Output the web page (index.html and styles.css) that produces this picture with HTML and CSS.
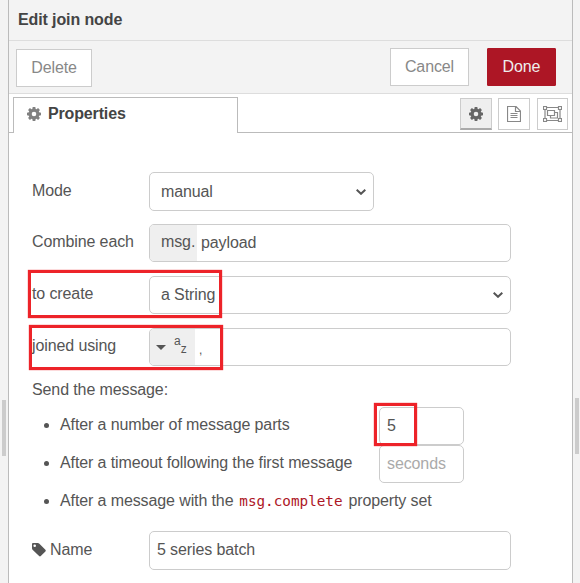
FILE: index.html
```html
<!DOCTYPE html>
<html lang="en">
<head>
<meta charset="utf-8">
<title>Edit join node</title>
<link rel="stylesheet" href="styles.css">
</head>
<body>
<svg class="defs" width="0" height="0">
  <symbol id="gear" viewBox="0 0 14 14">
    <path fill-rule="evenodd" d="M5.700 0h2.600l.4 1.900.8.300 1.600-1.100 1.800 1.800-1.100 1.600.3.800 1.900.4v2.600l-1.900.4-.3.800 1.100 1.600-1.800 1.800-1.600-1.100-.8.300-.4 1.900H5.700l-.4-1.900-.8-.3-1.600 1.100-1.800-1.800 1.100-1.600-.3-.8L0 8.300V5.700l1.900-.4.300-.8-1.100-1.600 1.800-1.800 1.600 1.100.8-.3zM7 4.700a2.300 2.300 0 1 0 0 4.600 2.300 2.300 0 0 0 0-4.600z"/>
  </symbol>
</svg>
<div class="app">
  <div class="gutter left"><span class="handle"></span></div>
  <main class="panel">
    <header class="title">Edit join node</header>
    <div class="toolbar">
      <button class="btn delete">Delete</button>
      <button class="btn cancel">Cancel</button>
      <button class="btn done">Done</button>
    </div>
    <nav class="tabs">
      <div class="tab"><svg class="gear" width="14" height="14"><use href="#gear"/></svg>Properties</div>
      <div class="icons">
        <span class="icon active"><svg width="14" height="14"><use href="#gear"/></svg></span>
        <span class="icon"><svg width="14" height="16" viewBox="0 0 14 16"><path d="M.5.5h8.500l4.500 4.500v10.500H.5zM8.500.5v5h5M3.500 7.500h7M3.500 9.500h7M3.500 11.500h7"/></svg></span>
        <span class="icon group"><svg width="19" height="16" viewBox="0 0 19 16"><path d="M3.500 1.500h12M3.500 14.500h12M2 3v10M17 3v10M.5.5h3v3h-3zM15.500.5h3v3h-3zM.5 12.500h3v3h-3zM15.500 12.500h3v3h-3zM4.500 4.500h7v5h-7zM11.500 6.500h3v5.500h-7V9.500"/></svg></span>
      </div>
    </nav>
    <form class="form">
      <div class="row mode"><label>Mode</label><div class="field select">manual<svg class="chev" width="10" height="6" viewBox="0 0 10 6"><path d="M.7.8 5 4.800 9.300.8"/></svg></div></div>
      <div class="row"><label>Combine each</label><div class="field typed"><span class="prefix msg">msg.</span><span class="value">payload</span></div></div>
      <div class="row"><label>to create</label><div class="field select">a String<svg class="chev" width="10" height="6" viewBox="0 0 10 6"><path d="M.7.8 5 4.800 9.300.8"/></svg></div><i class="mark mark-create"></i></div>
      <div class="row"><label>joined using</label><div class="field typed"><span class="prefix str"><b class="caret"></b><span class="az"><span>a</span><span>z</span></span></span><span class="value comma">,</span></div><i class="mark mark-joined"></i></div>
      <p class="send">Send the message:</p>
      <ul class="rules">
        <li><span class="desc">After a number of message parts</span><div class="field small">5<i class="mark mark-count"></i></div></li>
        <li><span class="desc">After a timeout following the first message</span><div class="field small hint">seconds</div></li>
        <li><span>After a message with the <code>msg.complete</code> property set</span></li>
      </ul>
      <div class="row name"><label><svg class="tag" width="14" height="14" viewBox="0 0 14 14"><path fill-rule="evenodd" d="M0 1.200C0 .5.5 0 1.200 0h4.500c.6 0 1.200.3 1.700.7l6 6c.5.500.5 1.200 0 1.700l-4.600 4.700c-.5.5-1.200.5-1.700 0L.8 7C.3 6.500 0 5.900 0 5.300zM2.700 1.400a1.300 1.300 0 1 0 0 2.600 1.300 1.300 0 0 0 0-2.600z"/></svg>Name</label><div class="field text">5 series batch</div></div>
    </form>
  </main>
  <div class="gutter right"><span class="handle"></span></div>
</div>
</body>
</html>
```
FILE: styles.css
```css
* { box-sizing: border-box; }
body {
  margin: 0;
  background: #f3f3f3;
  color: #555;
  font: 16px/20px "Liberation Sans", Arial, sans-serif;
  letter-spacing: -0.11px;
  overflow: hidden;
}
.defs { position: absolute; }
.app { display: flex; height: 583px; }
.gutter { background: #f3f3f3; flex: none; }
.gutter.left { width: 8px; padding: 400px 0 0 2px; }
.gutter.right { width: 7px; padding: 398px 0 0 2px; }
.handle { display: block; width: 4px; height: 56px; background: #ccc; }
.panel {
  width: 565px;
  flex: none;
  background: #fff;
  border-left: 1px solid #bbb;
  border-right: 1px solid #bbb;
}
.title {
  height: 41px;
  padding: 10px 0 0 9px;
  background: #f3f3f3;
  border-bottom: 1px solid #ddd;
  color: #444;
  font-weight: bold;
}
.toolbar {
  display: flex;
  height: 53px;
  padding: 7px 16px 0 7px;
  background: #f3f3f3;
  border-bottom: 1px solid #ddd;
}
.btn {
  height: 38px;
  padding: 0;
  border: 1px solid #ccc;
  background: #fff;
  color: #888;
  font: inherit;
  letter-spacing: inherit;
}
.delete { width: 76px; margin: 1px auto 0 0; }
.cancel { width: 79px; margin-right: 18px; }
.done { width: 69px; background: #ad1625; border-color: #ad1625; border-radius: 1px; color: #eee; }
.tabs {
  display: flex;
  justify-content: space-between;
  height: 39px;
  padding: 3px 4px 0;
  border-bottom: 1px solid #bbb;
}
.tab {
  width: 225px;
  height: 36px;
  padding: 6px 0 0 13px;
  border: 1px solid #bbb;
  border-bottom: 0;
  background: #fff;
  color: #444;
  font-weight: bold;
  letter-spacing: -0.15px;
}
svg { fill: #666; }
.gear { margin-right: 7px; fill: #808080; vertical-align: -2px; }
.icons { display: flex; padding-top: 1px; }
.icon {
  display: flex;
  align-items: center;
  justify-content: center;
  width: 32px;
  height: 32px;
  margin-right: 6px;
  border: 1px solid #ccc;
}
.icon svg path { fill: none; stroke: #888; stroke-width: 1.2; }
.icon.active { background: #efefef; border-bottom: 2px solid #aaa; }
.icon.group { width: 31px; margin: 0 0 0 1px; }
.form { padding: 39px 0 0 23px; }
.row { position: relative; display: flex; height: 38px; margin-bottom: 14px; }
.row.mode, .row.name { height: 39px; }
.row.mode { margin-bottom: 13px; }
.row label { width: 117px; padding-top: 8px; }
.row.mode label, .row.name label { padding-top: 9px; }
.field {
  display: flex;
  align-items: center;
  width: 362px;
  border: 1px solid #ccc;
  border-radius: 5px;
}
.mode .field { width: 225px; }
.select { justify-content: space-between; padding: 0 7px 0 11px; }
.chev { fill: none; stroke: #555; stroke-width: 2; }
.prefix {
  display: flex;
  align-items: center;
  align-self: stretch;
  background: #efefef;
  border-radius: 4px 0 0 4px;
}
.msg { width: 47px; padding: 0 0 2px 11px; }
.value { padding-left: 4px; }
.str { width: 45px; padding-left: 6px; }
.caret { border: 5.5px solid transparent; border-top-color: #555; border-bottom: 0; }
.az { display: flex; margin-left: 8px; font-size: 12px; line-height: 14px; letter-spacing: 0; }
.az span:first-child { margin-top: -4px; }
.az span:last-child { margin-top: 4px; }
.comma { font-size: 12px; padding: 5px 0 0 4px; }
.mark { position: absolute; border: 3px solid #ed2329; box-shadow: 0 0 1px #ed2329; }
.mark-create { left: -4px; top: -6px; width: 194px; height: 48px; }
.mark-joined { left: -3px; top: -3px; width: 194px; height: 45px; }
.send { margin: 0; height: 27px; padding-top: 0; }
.rules { margin: 0; padding: 0 0 0 28px; }
.rules li { position: relative; display: flex; align-items: center; height: 38px; }
.rules li::before {
  content: "";
  width: 5px;
  height: 5px;
  margin: -2px 11px 0 -16px;
  border-radius: 50%;
  background: #555;
}
.rules li > span { padding-bottom: 2px; }
.desc { width: 319px; }
.small { position: relative; width: 85px; height: 38px; padding-left: 7px; }
.hint { color: #aaa; }
.mark-count { left: -6px; top: -5px; width: 43px; height: 43px; z-index: 1; }
code { margin: 0 1.5px; color: #ad1625; font: 14.3px/16px "DejaVu Sans Mono", monospace; letter-spacing: 0; }
.name { margin-top: 10px; }
.tag { margin-right: 4px; fill: #555; vertical-align: -2px; }
.text { padding: 0 0 2px 7px; }
```
